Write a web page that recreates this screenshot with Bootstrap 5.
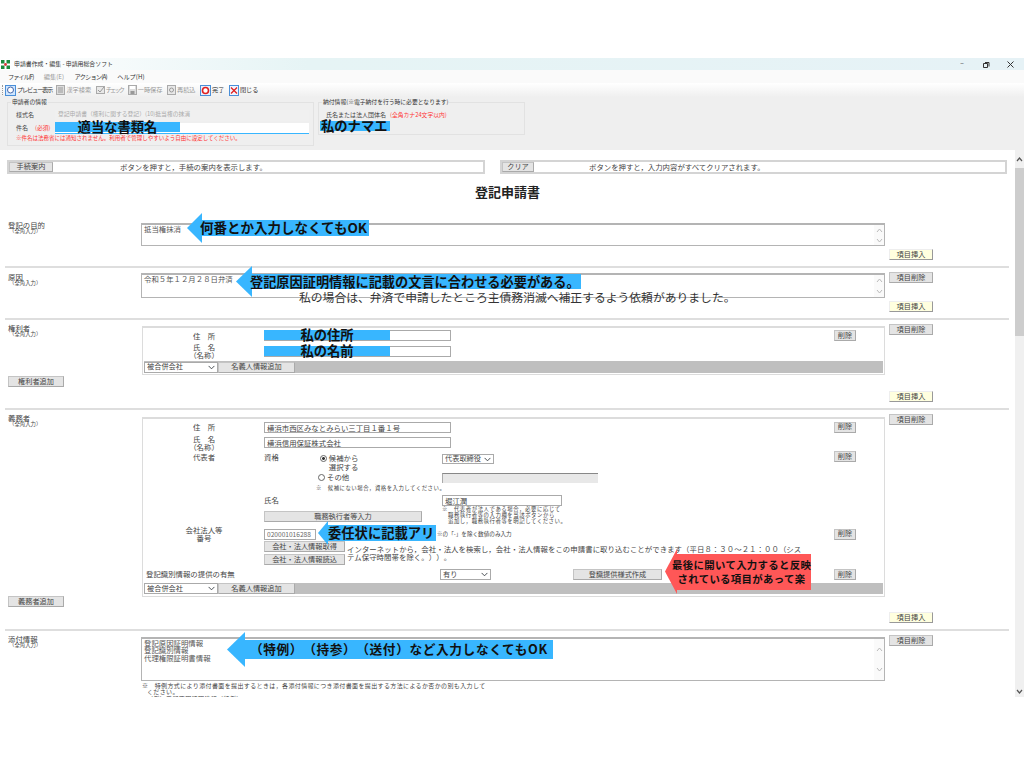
<!DOCTYPE html>
<html lang="ja">
<head>
<meta charset="utf-8">
<title>申請書作成・編集 - 申請用総合ソフト</title>
<link href="https://cdn.jsdelivr.net/npm/bootstrap@5.3.0/dist/css/bootstrap.min.css" rel="stylesheet">
<style>
html,body{margin:0;background:#fff;}
body{font-family:"Noto Sans CJK JP","Liberation Sans",sans-serif;font-size:7.4px;line-height:1.15;color:#444;text-spacing-trim:space-all;}
.stage{width:1024px;height:768px;padding-top:58px;overflow:hidden;}
.appwin{height:639px;}
.ttl{height:12px;background:linear-gradient(90deg,#fff 0,#e6f4f5 30%,#e6f2f6 100%);font-size:5.9px;color:#333;padding-right:2px;}
.ttl-ico{margin:0 4px 0 1px;}
.ttl-txt{width:120px;}
.win-ctl{width:24px;text-align:center;font-size:6.4px;}
.menu-row{height:13px;background:#fafafa;padding-left:8px;font-size:6.2px;color:#333;}
.menu-row span{margin-right:10.5px;}
.mn1{letter-spacing:-1px;}
.mn2{letter-spacing:-.8px;}
.off{color:#999;}
.tools{height:14px;background:linear-gradient(#fff,#efefef);padding-left:2px;font-size:6.2px;color:#333;}
.grip{width:1px;height:10px;border-left:1px dotted #999;margin-right:2px;}
.tool{gap:1px;margin-right:4.5px;}
.tn1{letter-spacing:-1.2px;}
.tn2{letter-spacing:-1.8px;}
.hdr{height:53px;background:#efefef;padding:5px 0 0 7px;gap:4px;font-size:6px;}
.fs1,.fs2{position:relative;border:1px solid #e2e2e2;padding:6px 4px 0 8px;}
.fs1{width:307px;height:44px;}
.fs2{width:207px;height:33px;padding-left:7px;}
.fs-ttl{position:absolute;left:3px;top:-4px;background:#efefef;padding:0 1px;white-space:nowrap;color:#333;font-size:5.8px;}
.fs1-row{height:13px;}
.fs1-lab{width:39px;white-space:nowrap;}
.req{color:#f33;font-size:5.8px;}
.fs1-lab .req{margin-left:7px;}
.fake-ro{flex:1;height:11px;background:#f0f0f0;color:#aaa;padding:1px 0 0 3px;font-size:5.8px;text-spacing-trim:normal;}
.fake-in{flex:1;height:11px;background:#fff;border-bottom:1px solid #38b6ff;}
.fs1-note{font-size:5.5px;color:#f33;margin-top:0;white-space:nowrap;}
.work{height:547px;}
.doc{width:1015px;background:#fff;padding-top:10px;overflow:hidden;}
.vbar{width:9px;background:#f0f0f0;}
.vcap{height:18px;color:#666;}
.vthumb{height:168px;background:#cdcdcd;}
.vend{height:11px;margin-top:auto;}
.guide{height:14px;gap:15px;padding-left:7px;padding-right:8px;font-size:7.4px;}
.g1{width:478px;}
.g2{flex:1;}
.gbox{border:2px solid #d4d4d4;background:#fff;}
.gbox .fbtn{height:10px;border-width:0 1px 0 0;border-color:#bbb;}
.gb1{width:44px;}
.gb2{width:32px;}
.gtxt1{padding-left:67px;}
.gtxt2{padding-left:55px;}
.doc-ttl{height:36px;font-size:13px;font-weight:700;color:#222;}
.fbtn.btn{font-size:7.2px;line-height:1;color:#444;padding:0;border:1px solid #c4c4c4;border-right-color:#aaa;border-bottom-color:#aaa;border-radius:0;background:#e4e4e4;white-space:nowrap;box-shadow:none;}
.ybtn.btn{background:#ffffdf;border-color:#eee #999 #999 #eee;}
.sq{width:44px;height:11px;}
.dl{width:22px;height:11px;}
.fsec{margin-left:5px;width:1004px;border-bottom:2px solid #dedede;}
.s1{height:58px;}
.s2{height:52px;}
.s3{height:90px;}
.s4{height:221px;}
.s5{height:80px;border-bottom:0;}
.lab{width:136px;padding-left:3px;flex:none;line-height:1;}
.lab1{padding-top:11px;}
.lab2{padding-top:5px;}
.lab3{padding-top:4px;}
.lab4{padding-top:4px;}
.lab5{padding-top:4px;}
.lab-sub{font-size:5.4px;padding-left:1px;line-height:1;margin-top:1px;}
.lab-head3{height:52px;}
.lab-head4{height:182px;}
.add.btn{width:56px;height:11px;display:block;}
.body-col{width:744px;flex:none;}
.side{width:48px;margin-left:4px;padding:4px 0 6px;flex:none;}
.side .ybtn{margin-top:auto;}
.pt13{padding-top:13px;}
.pt5{padding-top:5px;}
.pt6{padding-top:6px;}
.pt7{padding-top:7px;}
.side .sq{flex:none;}
.tbox{border:1px solid #b4b4b4;border-top-width:2px;background:#fff;padding:0 0 0 2px;font-size:7.4px;color:#555;}
.tb1{height:23px;}
.tb2{height:25px;}
.tb5{height:44px;}
.tb-sc{width:10px;background:#fafafa;}
.tb-tx{line-height:7.4px;padding-top:0;}
.fbox{border:1px solid #dcdcdc;border-top-width:2px;background:#fff;padding:0 1px;margin-left:1px;width:743px;position:relative;}
.fr{display:flex;}
.ac{align-items:center;}
.ca{width:120px;flex:none;text-align:center;line-height:7.6px;}
.cb{width:178px;flex:none;}
.cc{width:392px;flex:none;}
.cd{flex:1;}
.r16{height:16px;}.r15{height:15px;}.r22{height:22px;}.r11{height:11px;}.r10{height:10px;}.r19{height:19px;}.r14{height:14px;}.r26{height:26px;}
.top{margin-top:1px;}
.ftxt.form-control{width:187px;height:11px;min-height:0;padding:0 2px;border:1px solid #aaa;border-radius:0;font-size:7.4px;line-height:1;color:#444;background:#fff;}
.ftxt-s.form-control{width:120px;}
.ftxt-n.form-control{width:52px;color:#666;font-size:6.6px;}
.ftxt-off.form-control{width:156px;height:10px;background:#e8e8e8;border-top:1px solid #888;border-left:1px solid #aaa;border-right:0;border-bottom:0;}
.fsel.form-select{height:10px;min-height:0;padding:0 0 0 2px;border:1px solid #aaa;border-radius:0;font-size:7.2px;line-height:1;color:#444;background-position:right 2px center;background-size:7px 7px;}
.fs-a.form-select{width:52px;}
.fs-b.form-select{width:51px;height:11px;}
.fs-c.form-select{width:74px;height:11px;}
.bar{height:12px;background:#bfbfbf;margin:2px 0 1px;}
.bar4{height:11px;margin:1px 0 2px;}
.bar .fbtn{width:77px;height:11px;}
.rad{display:inline-block;width:7px;height:7px;border:1px solid #666;border-radius:50%;margin-right:2px;vertical-align:-1px;background:#fff;}
.rad-on{background:radial-gradient(circle,#333 35%,#fff 45%);}
.cb-in{padding-left:54px;line-height:1.2;}
.cb-in2{padding-left:41px;line-height:9px;}
.in2-l{padding-left:9px;}
.r3b{padding-top:3px;}
.wrap6{padding-left:52px;font-size:5.4px;letter-spacing:.5px;white-space:nowrap;}
.wrap7{font-size:5.4px;line-height:6px;letter-spacing:.55px;margin-top:-2px;white-space:nowrap;}
.exbtn{width:158px;height:11px;margin-top:3px;}
.n8{margin-left:-5px;margin-right:5px;font-size:5.6px;white-space:nowrap;}
.stack{width:83px;flex:none;}
.stack .fbtn{width:81px;height:11px;display:block;margin-bottom:2px;}
.para{flex:none;line-height:8px;padding-top:4px;letter-spacing:.06px;white-space:nowrap;}
.idlab{width:296px;padding-left:2px;flex:none;}
.fs-b-wrap{width:133px;flex:none;}
.mk{width:89px;height:11px;}
.mk-wrap{width:261px;flex:none;}
.fnote{margin-left:1px;padding-top:2px;font-size:6px;letter-spacing:.37px;line-height:6.4px;color:#444;white-space:nowrap;}
.fnote-i{padding-left:5px;}
/* overlay annotations */
.tag{position:absolute;display:flex;align-items:center;z-index:5;}
.tag-h{background:#38b6ff;clip-path:polygon(100% 0,0 50%,100% 100%);flex:none;}
.tag-b{position:relative;z-index:1;background:#38b6ff;color:#111;font-weight:700;font-size:13.3px;line-height:1;white-space:nowrap;display:flex;align-items:center;}
.tag-t{margin-left:-2px;}
.t1{left:187px;top:213px;}.t1 .tag-h{width:15px;height:30px;}.t1 .tag-b{width:167px;height:16px;font-size:13.5px;}
.t2{left:236px;top:266px;}.t2 .tag-h{width:16px;height:31px;}.t2 .tag-b{width:329px;height:15px;font-size:13.2px;}
.t3{left:318px;top:521px;}.t3 .tag-h{width:10px;height:24px;}.t3 .tag-b{width:108px;height:16px;}
.t5{left:227px;top:632px;}.t5 .tag-h{width:18px;height:35px;}.t5 .tag-b{width:308px;height:19px;font-size:12.7px;letter-spacing:.6px;padding-left:5px;}
.t4{left:665px;top:549px;}.t4 .tag-h{width:12px;height:45px;background:#ff5757;}
.t4 .tag-b{width:134px;height:36px;background:#ff5757;font-size:10.4px;letter-spacing:.35px;line-height:14px;display:block;text-align:center;padding-top:4px;}
.t4 .tag-b span{display:block;margin-left:-5px;}
.bl{position:absolute;background:#38b6ff;color:#111;font-weight:700;font-size:13.3px;line-height:1;text-align:center;white-space:nowrap;z-index:5;display:flex;align-items:center;justify-content:center;}
.b1{left:55px;top:122px;width:125px;height:10px;}
.b2{left:320px;top:121px;width:70px;height:10px;justify-content:flex-start;padding-left:1px;}
.b3{left:264px;top:330px;width:126px;height:10px;}
.b4{left:264px;top:346px;width:126px;height:10px;}
.plain{position:absolute;left:299px;top:290px;font-size:11.8px;line-height:14px;color:#333;white-space:nowrap;z-index:5;}
</style>
</head>
<body>
<div class="stage position-relative">
<div class="appwin d-flex flex-column">
  <div class="ttl d-flex align-items-center">
    <svg class="ttl-ico" width="9" height="9" viewBox="0 0 9 9"><rect width="9" height="9" fill="#1e8a3c"/><rect x="3.5" y="0" width="2" height="9" fill="#fff"/><rect x="0" y="3.5" width="9" height="2" fill="#fff"/><circle cx="4.5" cy="4.5" r="1.4" fill="#d33"/></svg>
    <span class="ttl-txt">申請書作成・編集 - 申請用総合ソフト</span>
    <span class="ms-auto win-ctl">−</span>
    <span class="win-ctl">
      <svg width="7" height="7" viewBox="0 0 7 7"><path d="M2 1.500h4v4M.5 2.500h4v4h-4z" fill="none" stroke="#333"/></svg>
    </span>
    <span class="win-ctl">
      <svg width="7" height="7" viewBox="0 0 7 7"><path d="M.5.500l6 6M6.500.500l-6 6" stroke="#333"/></svg>
    </span>
  </div>
  <div class="menu-row d-flex align-items-center">
    <span class="mn1">ファイル(F)</span><span class="off">編集(E)</span><span class="mn2">アクション(A)</span><span>ヘルプ(H)</span>
  </div>
  <div class="tools d-flex align-items-center">
    <span class="grip"></span>
    <span class="tool d-flex align-items-center"><svg width="11" height="11" viewBox="0 0 11 11"><rect x=".5" y=".5" width="10" height="10" fill="#cfe6ff" stroke="#4a8fd8"/><circle cx="5.500" cy="5" r="3" fill="#fff" stroke="#4466aa"/></svg><span class="tn1">プレビュー表示</span></span>
    <span class="tool d-flex align-items-center off"><svg width="9" height="10" viewBox="0 0 9 10"><rect x=".5" y=".5" width="8" height="9" fill="#ddd" stroke="#aaa"/><path d="M2 3h5M2 5h5M2 7h5" stroke="#999"/></svg><span>漢字検索</span></span>
    <span class="tool d-flex align-items-center off"><svg width="9" height="10" viewBox="0 0 9 10"><rect x=".5" y="1.500" width="8" height="7" fill="#e8e8e8" stroke="#aaa"/><path d="M2 5l2 2 4-5" fill="none" stroke="#999"/></svg><span class="tn2">チェック</span></span>
    <span class="tool d-flex align-items-center off"><svg width="9" height="10" viewBox="0 0 9 10"><rect x=".5" y=".5" width="8" height="9" fill="#ddd" stroke="#aaa"/><rect x="2" y="1" width="5" height="3" fill="#fff"/><rect x="2.500" y="6" width="4" height="3" fill="#999"/></svg><span>一時保存</span></span>
    <span class="tool d-flex align-items-center off"><svg width="9" height="10" viewBox="0 0 9 10"><rect x=".5" y=".5" width="8" height="9" fill="#e8e8e8" stroke="#aaa"/><circle cx="4.500" cy="5" r="2" fill="none" stroke="#999"/></svg><span>再読込</span></span>
    <span class="tool d-flex align-items-center"><svg width="11" height="11" viewBox="0 0 11 11"><rect x=".5" y=".5" width="10" height="10" fill="#e6f0ff" stroke="#4a8fd8"/><circle cx="5.500" cy="5.500" r="3" fill="#fff" stroke="#e02020" stroke-width="1.600"/></svg><span>完了</span></span>
    <span class="tool d-flex align-items-center"><svg width="10" height="11" viewBox="0 0 10 11"><rect x=".5" y=".5" width="9" height="10" fill="#f0f4ff" stroke="#4a8fd8"/><path d="M2 2.500l6 6M8 2.500l-6 6" stroke="#e02020" stroke-width="1.300"/></svg><span>閉じる</span></span>
  </div>
  <div class="hdr d-flex align-items-start">
    <div class="fs1">
      <div class="fs-ttl">申請者の情報</div>
      <div class="fs1-row d-flex align-items-center"><span class="fs1-lab">様式名</span><span class="fake-ro">登記申請書（権利に関する登記）(10)抵当権の抹消</span></div>
      <div class="fs1-row d-flex align-items-center"><span class="fs1-lab">件名<span class="req">(必須)</span></span><span class="fake-in"></span></div>
      <div class="fs1-note">※件名は法務省には通知されません。利用者で管理しやすいよう自由に設定してください。</div>
    </div>
    <div class="fs2">
      <div class="fs-ttl">納付情報(※電子納付を行う時に必要となります)</div>
      <div class="fs1-row d-flex align-items-center text-nowrap"><span>氏名または法人団体名</span><span class="req ms-1">(全角カナ24文字以内)</span></div>
    </div>
  </div>
  <div class="work d-flex">
    <div class="doc">
      <div class="guide d-flex">
        <div class="g1 gbox d-flex align-items-center"><button class="btn fbtn gb1" type="button">手続案内</button><span class="gtxt1">ボタンを押すと，手続の案内を表示します。</span></div>
        <div class="g2 gbox d-flex align-items-center"><button class="btn fbtn gb2" type="button">クリア</button><span class="gtxt2">ボタンを押すと，入力内容がすべてクリアされます。</span></div>
      </div>
      <div class="doc-ttl d-flex align-items-center justify-content-center">登記申請書</div>

      <section class="fsec s1 d-flex">
        <div class="lab lab1"><div>登記の目的</div><div class="lab-sub">（全角入力）</div></div>
        <div class="body-col pt13"><div class="tbox tb1 d-flex justify-content-between"><div class="tb-tx">抵当権抹消</div><div class="tb-sc d-flex flex-column justify-content-around align-items-center"><svg width="7" height="5" viewBox="0 0 7 5"><path d="M1 4l2.500-3L6 4" fill="none" stroke="#bbb"/></svg><svg width="7" height="5" viewBox="0 0 7 5"><path d="M1 1l2.500 3L6 1" fill="none" stroke="#bbb"/></svg></div></div></div>
        <div class="side d-flex flex-column"><button class="btn fbtn ybtn sq" type="button">項目挿入</button></div>
      </section>

      <section class="fsec s2 d-flex">
        <div class="lab lab2"><div>原因</div><div class="lab-sub">（全角入力）</div></div>
        <div class="body-col pt5"><div class="tbox tb2 d-flex justify-content-between"><div class="tb-tx">令和５年１２月２８日弁済</div><div class="tb-sc d-flex flex-column justify-content-around align-items-center"><svg width="7" height="5" viewBox="0 0 7 5"><path d="M1 4l2.500-3L6 4" fill="none" stroke="#bbb"/></svg><svg width="7" height="5" viewBox="0 0 7 5"><path d="M1 1l2.500 3L6 1" fill="none" stroke="#bbb"/></svg></div></div></div>
        <div class="side d-flex flex-column"><button class="btn fbtn sq" type="button">項目削除</button><button class="btn fbtn ybtn sq" type="button">項目挿入</button></div>
      </section>

      <section class="fsec s3 d-flex">
        <div class="lab lab3"><div class="lab-head3"><div>権利者</div><div class="lab-sub">（全角入力）</div></div><button class="btn fbtn add" type="button">権利者追加</button></div>
        <div class="body-col pt6">
          <div class="fbox">
            <div class="fr ac r15"><div class="ca">住　所</div><div class="cb"><input class="form-control ftxt" type="text" aria-label="住所"></div><div class="cc"></div><div class="cd"><button class="btn fbtn dl" type="button">削除</button></div></div>
            <div class="fr ac r16"><div class="ca">氏　名<br>（名称）</div><div class="cb"><input class="form-control ftxt" type="text" aria-label="氏名"></div></div>
            <div class="bar d-flex align-items-center"><select class="form-select fsel fs-c" aria-label="被合併会社"><option>被合併会社</option></select><button class="btn fbtn" type="button">名義人情報追加</button></div>
          </div>
        </div>
        <div class="side d-flex flex-column"><button class="btn fbtn sq" type="button">項目削除</button><button class="btn fbtn ybtn sq" type="button">項目挿入</button></div>
      </section>

      <section class="fsec s4 d-flex">
        <div class="lab lab4"><div class="lab-head4"><div>義務者</div><div class="lab-sub">（全角入力）</div></div><button class="btn fbtn add" type="button">義務者追加</button></div>
        <div class="body-col pt7">
          <div class="fbox">
            <div class="fr ac r16"><div class="ca">住　所</div><div class="cb"><input class="form-control ftxt" type="text" value="横浜市西区みなとみらい三丁目１番１号" aria-label="住所"></div><div class="cc"></div><div class="cd"><button class="btn fbtn dl" type="button">削除</button></div></div>
            <div class="fr ac r15"><div class="ca">氏　名<br>（名称）</div><div class="cb"><input class="form-control ftxt" type="text" value="横浜信用保証株式会社" aria-label="氏名"></div></div>
            <div class="fr r22"><div class="ca r3b">代表者</div><div class="cb d-flex r3b"><span>資格</span><div class="cb-in2"><span class="rad rad-on"></span>候補から<br><span class="in2-l">選択する</span></div></div><div class="cc r3b"><select class="form-select fsel fs-a top" aria-label="資格"><option>代表取締役</option></select></div><div class="cd top"><button class="btn fbtn dl" type="button">削除</button></div></div>
            <div class="fr ac r11"><div class="ca"></div><div class="cb cb-in"><span class="rad"></span>その他</div><div class="cc"><input class="form-control ftxt ftxt-off" type="text" aria-label="資格その他"></div></div>
            <div class="fr ac r10"><div class="ca"></div><div class="cb wrap6">※　候補にない場合，資格を入力してください。</div></div>
            <div class="fr ac r15"><div class="ca"></div><div class="cb">氏名</div><div class="cc"><input class="form-control ftxt ftxt-s" type="text" value="堀江潤" aria-label="代表者氏名"></div></div>
            <div class="fr r19"><div class="ca"></div><div class="cb"><button class="btn fbtn exbtn" type="button">職務執行者等入力</button></div><div class="cc wrap7">※　代表者が法人である場合，必要に応じて<br>　職務執行者等の入力欄を当該ボタンから<br>　追加し，職務執行者等を明記してください。</div></div>
            <div class="fr ac r14"><div class="ca">会社法人等<br>番号</div><div class="cb"><input class="form-control ftxt ftxt-n" type="text" value="020001016288" aria-label="会社法人等番号"></div><div class="cc n8">※の「-」を除く数値のみ入力</div><div class="cd"><button class="btn fbtn dl" type="button">削除</button></div></div>
            <div class="fr r26"><div class="ca"></div><div class="stack"><button class="btn fbtn" type="button">会社・法人情報取得</button><button class="btn fbtn" type="button">会社・法人情報読込</button></div><div class="para">インターネットから，会社・法人を検索し，会社・法人情報をこの申請書に取り込むことができます（平日８：３０～２１：００（シス<br>テム保守時間帯を除く。））。</div></div>
            <div class="fr ac r15"><div class="idlab">登記識別情報の提供の有無</div><div class="fs-b-wrap"><select class="form-select fsel fs-b" aria-label="提供の有無"><option>有り</option></select></div><div class="mk-wrap"><button class="btn fbtn mk" type="button">登識提供様式作成</button></div><div class="cd"><button class="btn fbtn dl" type="button">削除</button></div></div>
            <div class="bar bar4 d-flex align-items-center"><select class="form-select fsel fs-c" aria-label="被合併会社"><option>被合併会社</option></select><button class="btn fbtn" type="button">名義人情報追加</button></div>
          </div>
        </div>
        <div class="side d-flex flex-column"><button class="btn fbtn sq" type="button">項目削除</button><button class="btn fbtn ybtn sq" type="button">項目挿入</button></div>
      </section>

      <section class="fsec s5 d-flex">
        <div class="lab lab5"><div>添付情報</div><div class="lab-sub">（全角入力）</div></div>
        <div class="body-col pt6">
          <div class="tbox tb5 d-flex justify-content-between"><div class="tb-tx">登記原因証明情報<br>登記識別情報<br>代理権限証明書情報</div><div class="tb-sc d-flex flex-column justify-content-around align-items-center"><svg width="7" height="5" viewBox="0 0 7 5"><path d="M1 4l2.500-3L6 4" fill="none" stroke="#bbb"/></svg><svg width="7" height="5" viewBox="0 0 7 5"><path d="M1 1l2.500 3L6 1" fill="none" stroke="#bbb"/></svg></div></div>
          <div class="fnote">※　特例方式により添付書面を提出するときは，各添付情報につき添付書面を提出する方法によるか否かの別も入力して<br><span class="fnote-i">ください。</span><br><span class="fnote-i">（例）登記原因証明情報（特例）</span></div>
        </div>
        <div class="side d-flex flex-column"><button class="btn fbtn sq" type="button">項目削除</button></div>
      </section>
    </div>
    <div class="vbar d-flex flex-column">
      <div class="vcap d-flex align-items-center justify-content-center"><svg width="7" height="5" viewBox="0 0 7 5"><path d="M1 4l2.500-3L6 4" fill="none" stroke="#555" stroke-width="1.200"/></svg></div>
      <div class="vthumb"></div>
      <div class="vend d-flex align-items-center justify-content-center"><svg width="7" height="5" viewBox="0 0 7 5"><path d="M1 1l2.500 3L6 1" fill="none" stroke="#555" stroke-width="1.200"/></svg></div>
    </div>
  </div>
</div>

<div class="bl b1">適当な書類名</div>
<div class="bl b2">私のナマエ</div>
<div class="tag t1"><div class="tag-h"></div><div class="tag-b"><span class="tag-t">何番とか入力しなくてもOK</span></div></div>
<div class="tag t2"><div class="tag-h"></div><div class="tag-b"><span class="tag-t">登記原因証明情報に記載の文言に合わせる必要がある。</span></div></div>
<div class="plain">私の場合は、弁済で申請したところ主債務消滅へ補正するよう依頼がありました。</div>
<div class="bl b3">私の住所</div>
<div class="bl b4">私の名前</div>
<div class="tag t3"><div class="tag-h"></div><div class="tag-b">委任状に記載アリ</div></div>
<div class="tag t4"><div class="tag-h"></div><div class="tag-b"><span>最後に開いて入力すると反映</span><span>されている項目があって楽</span></div></div>
<div class="tag t5"><div class="tag-h"></div><div class="tag-b">（特例）（持参）（送付）など入力しなくてもOK</div></div>
</div>
<script src="https://cdn.jsdelivr.net/npm/bootstrap@5.3.0/dist/js/bootstrap.bundle.min.js"></script>
</body>
</html>
